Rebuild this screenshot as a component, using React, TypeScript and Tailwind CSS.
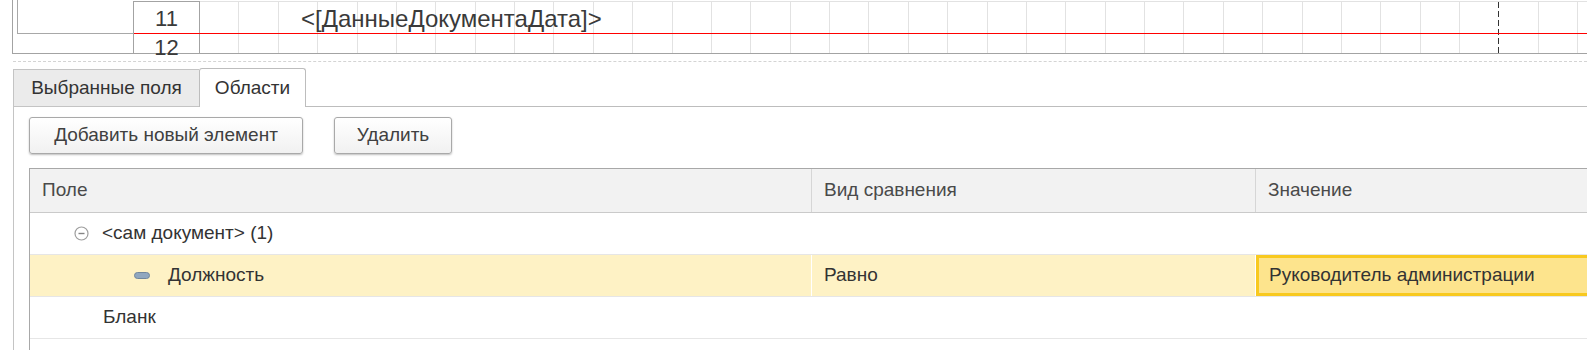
import React from 'react'

const cols = Array.from({ length: 36 }, (_, i) => i)

function MinusCircle() {
  return (
    <svg width="15" height="15" viewBox="0 0 15 15" className="shrink-0">
      <circle cx="7.5" cy="7.5" r="6.5" fill="#fff" stroke="#9e9e9e" strokeWidth="1.2" />
      <line x1="4.5" y1="7.5" x2="10.5" y2="7.5" stroke="#858585" strokeWidth="1.4" />
    </svg>
  )
}

function FieldPill() {
  return <div className="w-[16px] h-[7px] rounded-full bg-[#90a7bf] border border-[#71879d] shrink-0" />
}

export default function App() {
  return (
    <div className="w-[1587px] h-[350px] overflow-hidden bg-white text-[#333] [font-family:'Liberation_Sans',Arial,sans-serif]">
      {/* Spreadsheet fragment */}
      <div className="relative ml-[12px] h-[54px] border-l border-b border-[#a3a3a3] flex pt-[1px]">
        <div className="w-[120px] shrink-0">
          <div className="ml-[4px] -mt-[1px] h-[34px] border-l border-b border-[#a8a8a8]" />
        </div>
        <div className="w-[67px] shrink-0 border-x border-t border-[#a3a3a3] flex flex-col text-[22px] text-[#3a3a3a]">
          <div className="h-[33px] flex items-center justify-center">11</div>
          <div className="pt-[2px] flex justify-center leading-none">12</div>
        </div>
        <div className="relative flex-1 flex border-t border-[#e2e2e2]">
          {cols.map(i => (
            <React.Fragment key={i}>
              <div className={i === 32 ? 'w-[38.375px] shrink-0' : 'w-[39.375px] shrink-0 border-r border-[#e2e2e2]'} />
              {i === 32 && (
                <div className="w-[1px] shrink-0 bg-[repeating-linear-gradient(to_bottom,#333_0,#333_6px,transparent_6px,transparent_9px)]" />
              )}
            </React.Fragment>
          ))}
          <div className="absolute left-[101px] top-0 h-[33px] flex items-center text-[24px] text-[#3a3a3a] whitespace-nowrap">
            &lt;[ДанныеДокументаДата]&gt;
          </div>
        </div>
        <div className="absolute left-[121px] right-0 top-[33px] h-[1px] bg-[#ff0000]" />
      </div>

      {/* Lower panel */}
      <div className="ml-[13px] mt-[7px] border-t border-dashed border-[#d4d4d4]" />
      <div className="ml-[13px] mt-[6px] text-[19px]">
        {/* Tabs */}
        <div className="flex items-end h-[39px]">
          <div className="w-[186px] h-[38px] bg-[#ebebeb] border-l border-t border-b border-[#c4c4c4] flex items-center justify-center text-[#333]">
            Выбранные поля
          </div>
          <div className="w-[107px] h-[39px] bg-white border-x border-t border-[#bdbdbd] rounded-t-[3px] flex items-center justify-center">
            Области
          </div>
          <div className="flex-1 border-b border-[#bdbdbd]" />
        </div>

        <div className="border-l border-[#c4c4c4] pl-[15px] pt-[10px] h-[250px]">
          {/* Buttons */}
          <div className="flex gap-[31px]">
            <button className="w-[274px] h-[37px] rounded-[3px] border border-[#a9a9a9] bg-gradient-to-b from-white to-[#f1f1f1] shadow-[0_1px_2px_rgba(0,0,0,0.25)] text-[#404040]">
              Добавить новый элемент
            </button>
            <button className="w-[118px] h-[37px] rounded-[3px] border border-[#a9a9a9] bg-gradient-to-b from-white to-[#f1f1f1] shadow-[0_1px_2px_rgba(0,0,0,0.25)] text-[#404040]">
              Удалить
            </button>
          </div>

          {/* Table */}
          <div className="mt-[14px] border-l border-t border-[#a8a8a8] w-[1700px]">
            <div className="flex h-[44px] bg-[#f2f2f2] border-b border-[#cacaca] text-[#4a4a4a]">
              <div className="w-[782px] shrink-0 flex items-center pl-[12px] border-r border-[#d6d6d6]">Поле</div>
              <div className="w-[444px] shrink-0 flex items-center pl-[12px] border-r border-[#d6d6d6]">Вид сравнения</div>
              <div className="flex-1 flex items-center pl-[12px]">Значение</div>
            </div>

            <div className="flex h-[42px] border-b border-[#e6e6e6]">
              <div className="w-[782px] shrink-0 flex items-center pl-[44px] gap-[13px] border-r border-white">
                <MinusCircle />
                <span>&lt;сам документ&gt; (1)</span>
              </div>
              <div className="w-[444px] shrink-0 border-r border-white" />
              <div className="flex-1" />
            </div>

            <div className="flex h-[42px] border-b border-[#e6e6e6] bg-[#fef2c5]">
              <div className="w-[782px] shrink-0 flex items-center pl-[104px] gap-[18px] border-r border-white">
                <FieldPill />
                <span>Должность</span>
              </div>
              <div className="w-[444px] shrink-0 flex items-center pl-[12px] border-r border-white">Равно</div>
              <div className="flex-1 flex items-center pl-[10px] bg-[#fde48d] border-[3px] border-[#f8c91f]">
                Руководитель администрации
              </div>
            </div>

            <div className="flex h-[42px] border-b border-[#e6e6e6]">
              <div className="w-[782px] shrink-0 flex items-center pl-[73px]">Бланк</div>
              <div className="w-[444px] shrink-0" />
              <div className="flex-1" />
            </div>
            <div className="h-[42px]" />
          </div>
        </div>
      </div>
    </div>
  )
}
